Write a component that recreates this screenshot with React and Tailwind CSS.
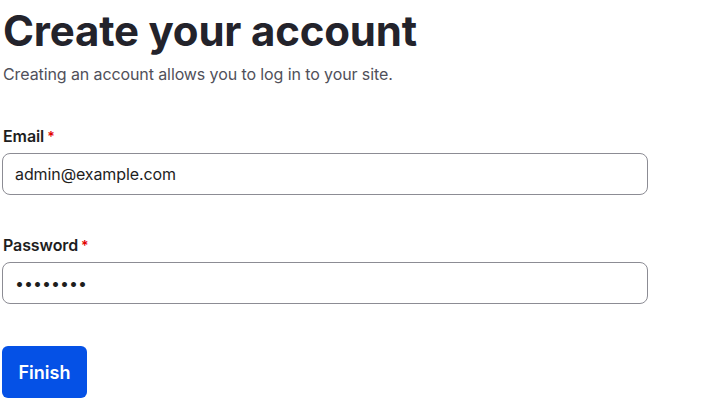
import React, { useState } from "react";

export default function App() {
  const [email, setEmail] = useState("admin@example.com");
  const [password, setPassword] = useState("password");

  return (
    <div className="min-h-screen bg-white px-[2px] text-[#1e1e1e]" style={{ fontFamily: "Inter, 'Noto Sans', sans-serif" }}>
      {/* Header */}
      <h1 className="text-[42px] font-bold leading-[62px] tracking-[-0.2px] text-[#23232b] pl-px">
        Create your account
      </h1>
      <p className="text-[16px] leading-[24px] tracking-[-0.1px] text-[#50505a] pl-px">
        Creating an account allows you to log in to your site.
      </p>

      <form className="mt-[38px] w-[646px]" onSubmit={(e) => e.preventDefault()}>
        <div className="flex flex-col">
          <label className="text-[16px] font-semibold leading-[24px] tracking-[-0.1px] text-[#1e1e1e] pl-px">
            Email<span className="text-[#e20000] ml-[3px] text-[14px]">*</span>
          </label>
          <input
            type="email"
            value={email}
            onChange={(e) => setEmail(e.target.value)}
            className="mt-[4px] h-[42px] w-full rounded-[8px] border border-[#8c8c94] px-[12px] text-[16px] tracking-[-0.1px] text-[#1e1e1e] focus:outline-none"
          />
        </div>

        <div className="flex flex-col mt-[38px]">
          <label className="text-[16px] font-semibold leading-[24px] tracking-[-0.1px] text-[#1e1e1e] pl-px">
            Password<span className="text-[#e20000] ml-[3px] text-[14px]">*</span>
          </label>
          <input
            type="password"
            value={password}
            onChange={(e) => setPassword(e.target.value)}
            className="mt-[4px] h-[42px] w-full rounded-[8px] border border-[#8c8c94] px-[12px] text-[16px] text-[#1e1e1e] focus:outline-none"
          />
        </div>

        <button
          type="submit"
          className="mt-[42px] h-[52px] w-[85px] rounded-[6px] bg-[#0551e6] text-[18px] font-semibold text-white"
        >
          Finish
        </button>
      </form>
    </div>
  );
}
